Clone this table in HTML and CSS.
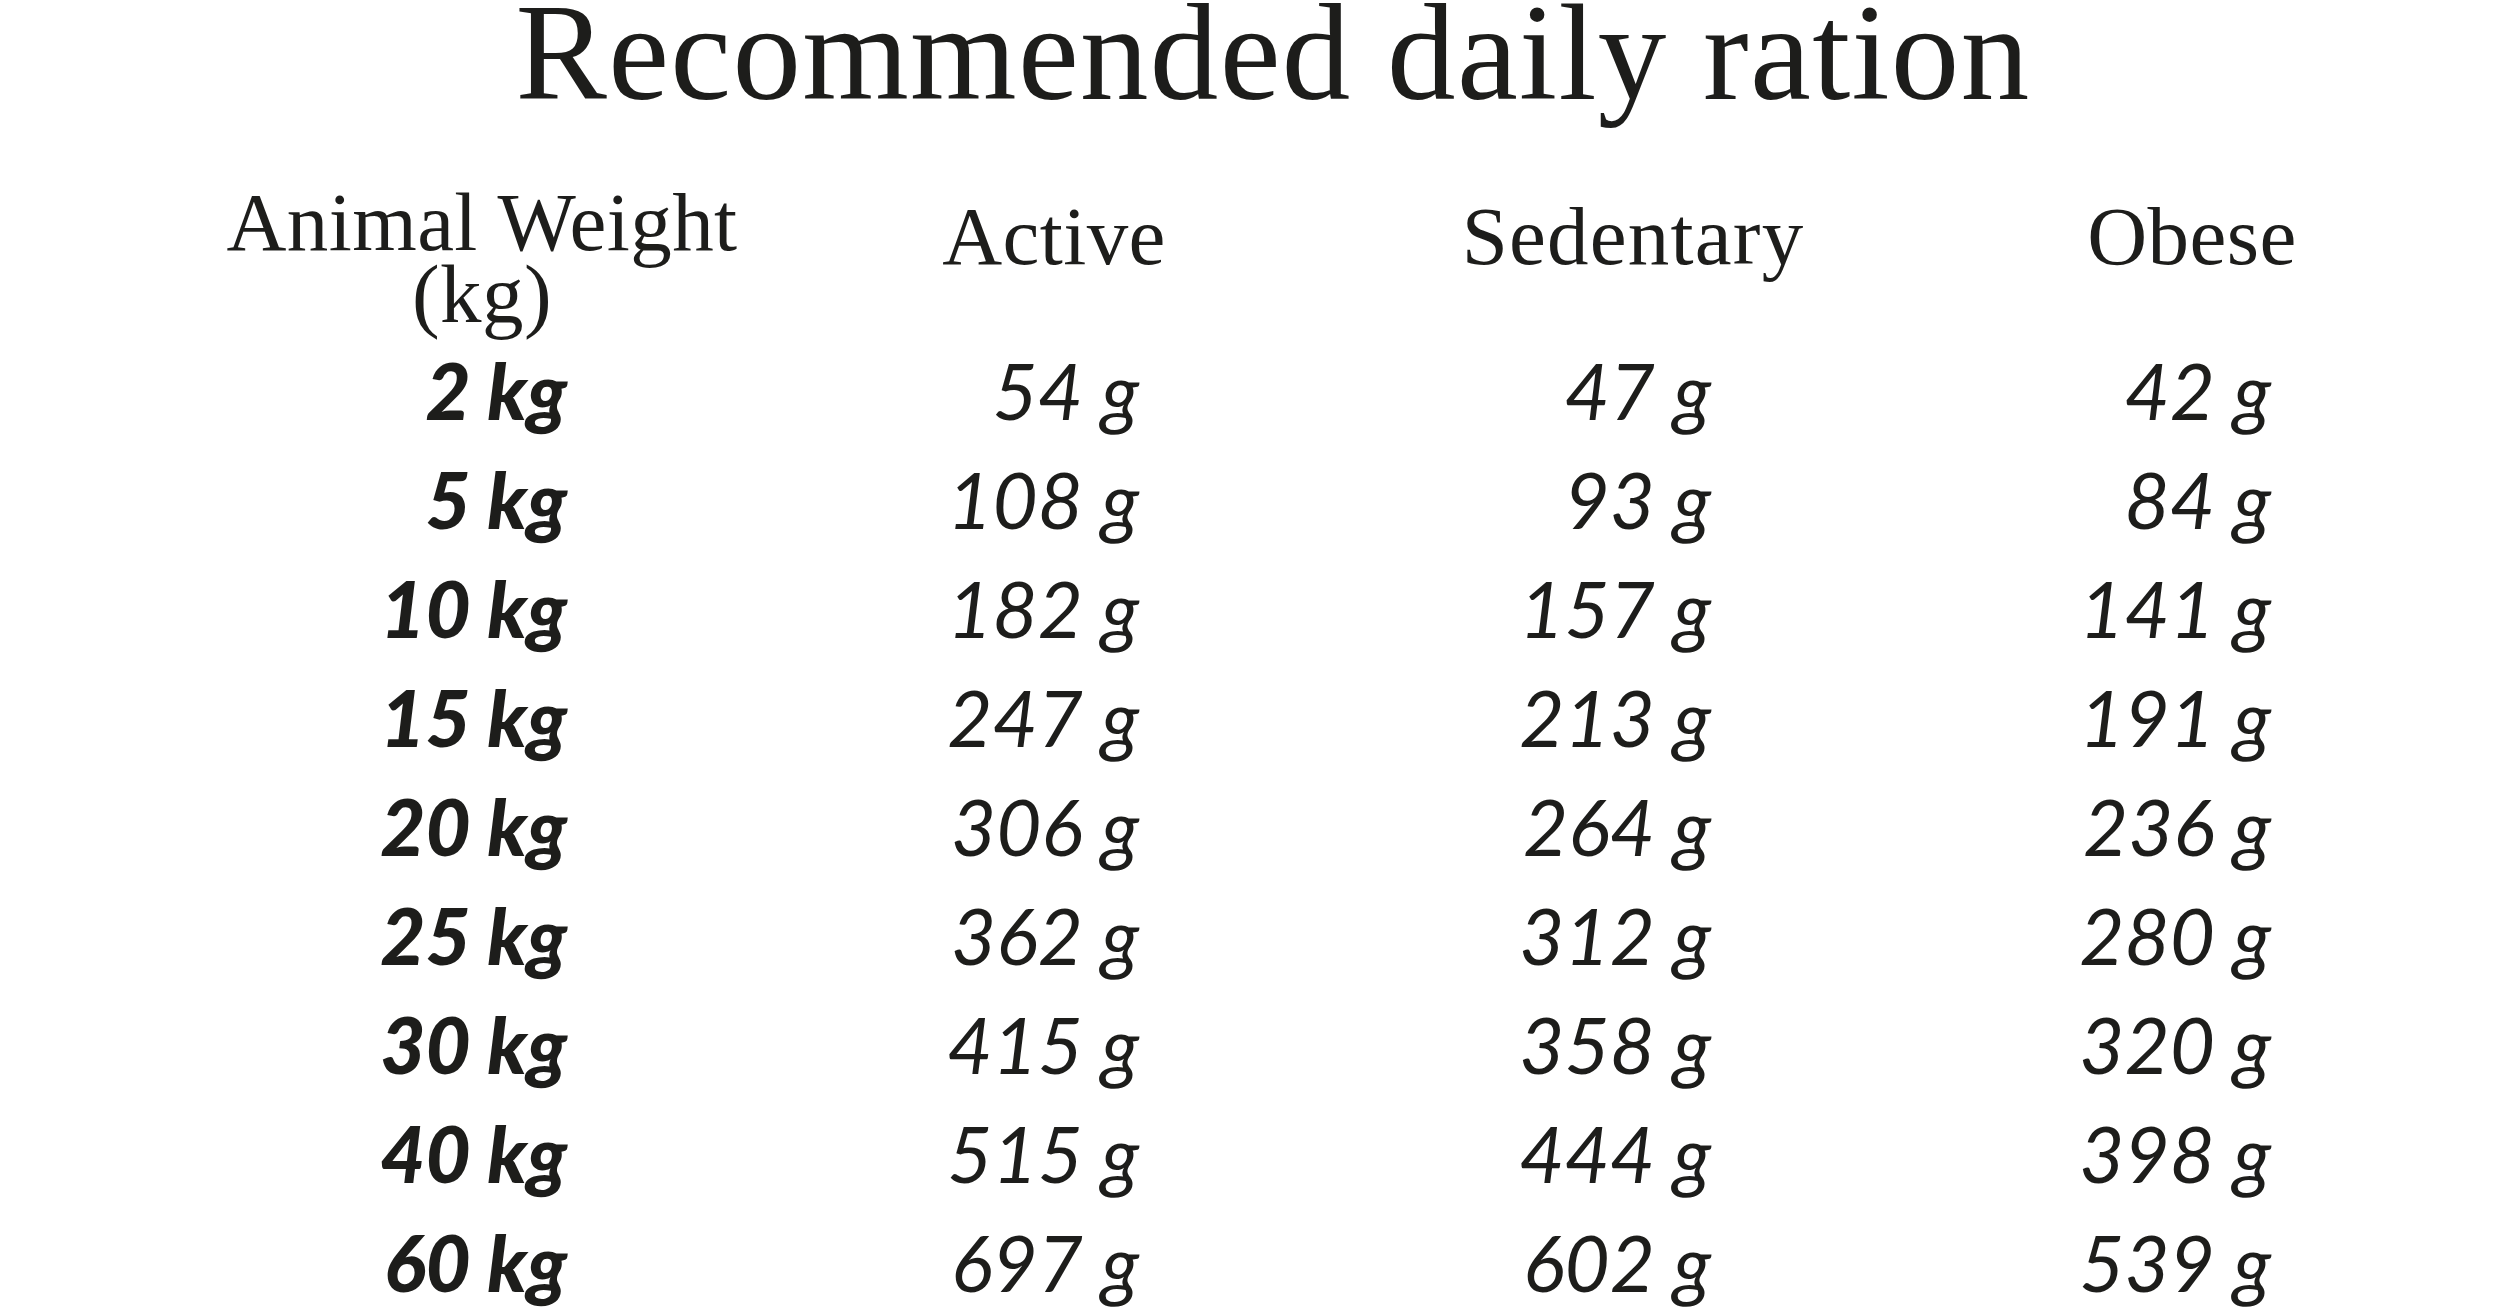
FILE: index.html
```html
<!DOCTYPE html>
<html lang="en">
<head>
<meta charset="utf-8">
<title>Recommended daily ration</title>
<link rel="stylesheet" href="styles.css">
</head>
<body>
<main class="page">
  <h1 class="title">Recommended daily ration</h1>
  <div class="ration">
    <div class="head head-multi">Animal Weight<br>(kg)</div>
    <div class="head">Active</div>
    <div class="head head-wide">Sedentary</div>
    <div class="head">Obese</div>

    <div class="cell weight">2 kg</div><div class="cell">54 g</div><div class="cell">47 g</div><div class="cell">42 g</div>
    <div class="cell weight">5 kg</div><div class="cell">108 g</div><div class="cell">93 g</div><div class="cell">84 g</div>
    <div class="cell weight">10 kg</div><div class="cell">182 g</div><div class="cell">157 g</div><div class="cell">141 g</div>
    <div class="cell weight">15 kg</div><div class="cell">247 g</div><div class="cell">213 g</div><div class="cell">191 g</div>
    <div class="cell weight">20 kg</div><div class="cell">306 g</div><div class="cell">264 g</div><div class="cell">236 g</div>
    <div class="cell weight">25 kg</div><div class="cell">362 g</div><div class="cell">312 g</div><div class="cell">280 g</div>
    <div class="cell weight">30 kg</div><div class="cell">415 g</div><div class="cell">358 g</div><div class="cell">320 g</div>
    <div class="cell weight">40 kg</div><div class="cell">515 g</div><div class="cell">444 g</div><div class="cell">398 g</div>
    <div class="cell weight">60 kg</div><div class="cell">697 g</div><div class="cell">602 g</div><div class="cell">539 g</div>
  </div>
</main>
</body>
</html>
```

FILE: styles.css
```css
html, body {
  margin: 0;
  padding: 0;
  background: #ffffff;
}

body {
  width: 2500px;
  height: 1310px;
  overflow: hidden;
  color: #1d1d1b;
}

.page {
  display: flex;
  flex-direction: column;
}

.title {
  margin: 0;
  padding-left: 46px;
  font-family: "Liberation Serif", "Times New Roman", serif;
  font-weight: 400;
  font-size: 137px;
  line-height: 106px;
  letter-spacing: 1.3px;
  text-align: center;
}

.ration {
  display: grid;
  grid-template-columns: 572px 572px 572px 560px;
  padding-left: 196px;
  margin-top: 80px;
}

.head {
  font-family: "Liberation Serif", "Times New Roman", serif;
  font-size: 83px;
  line-height: 72px;
  letter-spacing: 0.4px;
  text-align: center;
  padding-top: 14px;
}

.head-multi {
  padding-top: 0;
  margin-bottom: 6px;
}

.head-wide {
  letter-spacing: 1.2px;
  padding-left: 14px;
}

.cell {
  font-family: Lato, "Noto Sans", sans-serif;
  font-style: italic;
  font-weight: 400;
  font-size: 78px;
  line-height: 109px;
  text-align: right;
  padding-right: 201px;
  white-space: nowrap;
}

.weight {
  font-weight: 900;
}
```
